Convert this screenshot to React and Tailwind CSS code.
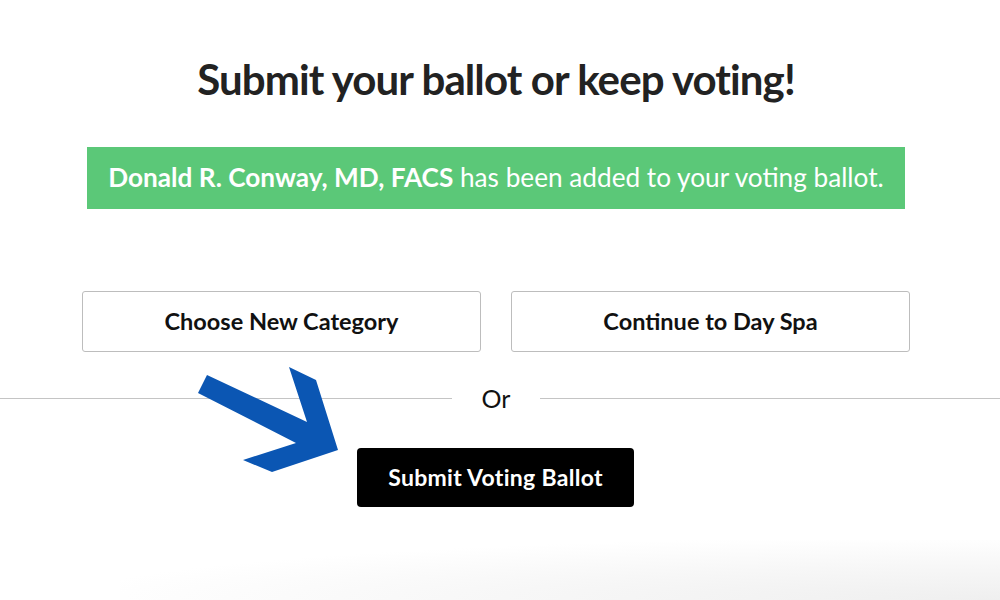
import React from 'react'

function Arrow() {
  return (
    <svg
      className="absolute left-0 top-0 pointer-events-none"
      width="1000"
      height="600"
      viewBox="0 0 1000 600"
    >
      <polygon
        points="207,375 307,422 289,367 316,380 338,450 272,472 243,460 296,443 198,393"
        fill="#0b56b3"
      />
    </svg>
  )
}

export default function App() {
  return (
    <div className="relative h-[600px] w-full overflow-hidden bg-white font-['Lato','Noto_Sans',sans-serif]">
      {/* soft shadow at the bottom edge */}
      <div className="absolute bottom-0 right-0 h-[60px] w-[880px] bg-[radial-gradient(ellipse_at_bottom_right,#efefef_0%,#f7f7f7_40%,#ffffff_75%)]" />

      <div className="relative flex flex-col items-center pr-[8px] pt-[52px]">
        <h1 className="text-[42px] font-bold leading-[54px] tracking-[-0.9px] text-[#222]">
          Submit your ballot or keep voting!
        </h1>

        <div className="mt-[41px] flex h-[62px] w-[818px] items-center justify-center bg-[#5bc878] text-[26.2px] text-white">
          <span>
            <span className="font-bold">Donald R. Conway, MD, FACS</span> has been added to your voting ballot.
          </span>
        </div>

        <div className="mt-[82px] flex gap-[30px]">
          <button
            type="button"
            className="h-[61px] w-[399px] rounded-[3px] border border-[#bdbdbd] bg-white text-[23.5px] font-bold text-[#111]"
          >
            Choose New Category
          </button>
          <button
            type="button"
            className="h-[61px] w-[399px] rounded-[3px] border border-[#bdbdbd] bg-white text-[23.5px] font-bold text-[#111]"
          >
            Continue to Day Spa
          </button>
        </div>
      </div>

      {/* divider */}
      <div className="relative mt-[33px] flex items-center">
        <div className="h-px w-[452px] bg-[#c4c4c4]" />
        <span className="w-[88px] text-center text-[25px] leading-[26px] text-[#111]">Or</span>
        <div className="h-px flex-1 bg-[#c4c4c4]" />
      </div>

      <div className="relative mt-[37px] flex justify-center pr-[9px]">
        <button
          type="button"
          className="h-[59px] w-[277px] rounded-[4px] bg-black text-[23px] font-bold tracking-[0.3px] text-white"
        >
          Submit Voting Ballot
        </button>
      </div>

      <Arrow />
    </div>
  )
}
